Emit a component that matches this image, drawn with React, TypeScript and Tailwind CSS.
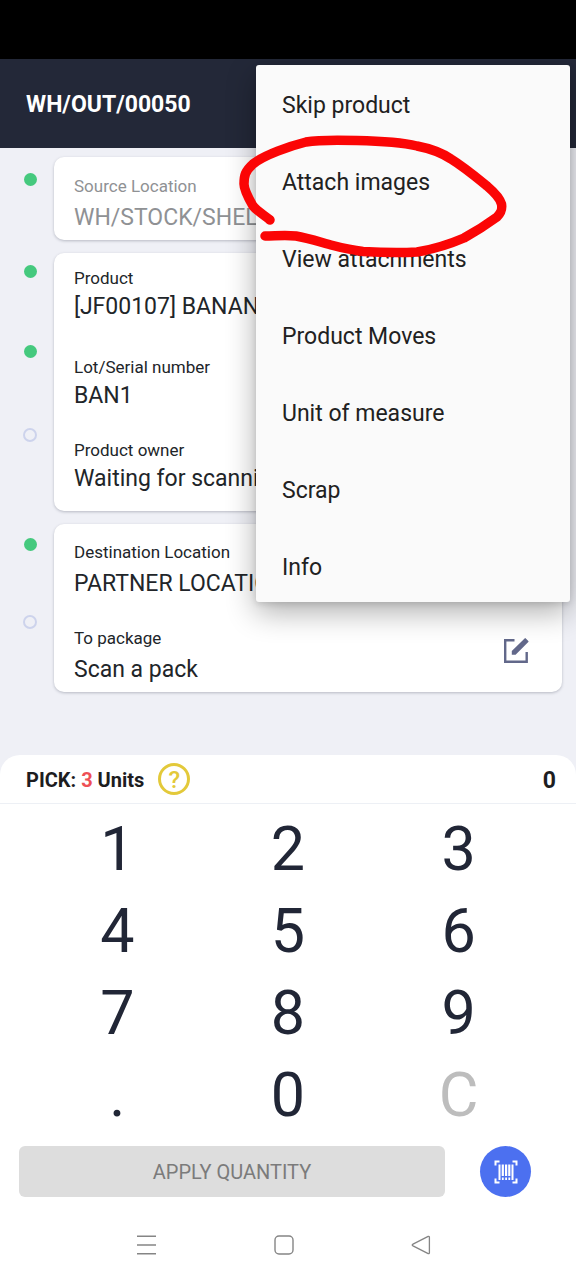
import { clsx } from "clsx";

type Field = {
  label: string;
  value: string;
  className?: string;
};

type Dot = {
  done: boolean;
  className?: string;
};

const MENU_ITEMS = [
  "Skip product",
  "Attach images",
  "View attachments",
  "Product Moves",
  "Unit of measure",
  "Scrap",
  "Info",
];

const KEYS = ["1", "2", "3", "4", "5", "6", "7", "8", "9", ".", "0", "C"];

export default function App() {
  return (
    <div className="relative flex min-h-screen flex-col overflow-hidden bg-[#eff0f6] font-[Roboto,sans-serif] text-[#212529]">
      {/* Status bar */}
      <div className="h-[59px] bg-black" />

      <header className="flex h-[89px] items-center bg-[#232838] px-[26px] pt-1">
        <h1 className="text-[23px] font-bold text-white">WH/OUT/00050</h1>
      </header>

      <main className="flex flex-1 flex-col gap-[13px] pt-[9px] pr-3.5 pb-[63px]">
        <StepCard
          dots={[{ done: true, className: "mt-3.5" }]}
          fields={[{ label: "Source Location", value: "WH/STOCK/SHELF 1" }]}
          className="pt-[19px] pb-2 text-[#8f9194]"
        />
        <StepCard
          dots={[
            { done: true, className: "mt-2.5" },
            { done: true, className: "mt-16" },
            { done: false, className: "mt-[68px]" },
          ]}
          fields={[
            { label: "Product", value: "[JF00107] BANANA" },
            { label: "Lot/Serial number", value: "BAN1", className: "mt-9" },
            { label: "Product owner", value: "Waiting for scanning", className: "mt-[30px]" },
          ]}
          className="pt-[15px] pb-[18px]"
          dense
        />
        <StepCard
          dots={[
            { done: true, className: "mt-3" },
            { done: false, className: "mt-[62px]" },
          ]}
          fields={[
            { label: "Destination Location", value: "PARTNER LOCATION" },
            { label: "To package", value: "Scan a pack", className: "mt-[30px]" },
          ]}
          className="pt-[18px] pb-2"
          editable
        />
      </main>

      {/* Quantity panel */}
      <section className="rounded-t-[20px] bg-white">
        <div className="flex h-[49px] items-center border-b border-[#edf0f5] px-5 pl-[26px]">
          <p className="pt-0.5 text-xl font-bold text-[#1d1d1f]">
            PICK: <span className="text-[#ee4f55]">3</span> Units
          </p>
          <button
            type="button"
            aria-label="Help"
            className="ml-3.5 flex size-8 items-center justify-center rounded-full border-3 border-[#e3c93a] pt-0.5 text-2xl font-medium text-[#e3c93a]"
          >
            ?
          </button>
          <output className="ml-auto pt-1 text-[23px] font-bold text-[#1d1d1f]">0</output>
        </div>

        <div className="grid grid-cols-3 px-8 pt-[3px]">
          {KEYS.map((key) => (
            <button
              key={key}
              type="button"
              className={clsx(
                "h-[82px] pt-0.5 text-[61px] leading-none",
                key === "C" ? "text-[#bdbdbd]" : "text-[#212636]",
              )}
            >
              {key}
            </button>
          ))}
        </div>

        <div className="flex items-center gap-[35px] pt-[11px] pr-[45px] pl-[19px]">
          <button
            type="button"
            disabled
            className="h-[51px] flex-1 rounded-md bg-[#dddddd] text-xl text-[#7b7b7b]"
          >
            APPLY QUANTITY
          </button>
          <button
            type="button"
            aria-label="Scan barcode"
            className="flex size-[51px] items-center justify-center rounded-full bg-[#4c70f0] text-white"
          >
            <BarcodeIcon />
          </button>
        </div>

        <SystemNav />
      </section>

      <div
        role="menu"
        className="absolute top-[65px] right-1.5 flex w-[314px] flex-col gap-1.5 rounded-[3px] bg-[#fafafa] pt-1 shadow-[0_10px_30px_rgba(0,0,0,0.32),0_2px_6px_rgba(0,0,0,0.12)]"
      >
        {MENU_ITEMS.map((item) => (
          <button
            key={item}
            type="button"
            role="menuitem"
            className="h-[71px] px-[26px] pt-[3px] text-left text-[23px] text-[#212121]"
          >
            {item}
          </button>
        ))}
      </div>

      <Marker />
    </div>
  );
}

function StepCard({
  dots,
  fields,
  className,
  dense,
  editable,
}: {
  dots: Dot[];
  fields: Field[];
  className: string;
  dense?: boolean;
  editable?: boolean;
}) {
  return (
    <div className="flex">
      <div className="flex w-[54px] shrink-0 flex-col">
        {dots.map((dot, i) => (
          <div key={i} className={clsx("flex h-4 items-center pl-[23px]", dot.className)}>
            <span
              className={clsx(
                "rounded-full",
                dot.done ? "ml-px size-[13px] bg-[#45c97e]" : "size-3.5 border-2 border-[#cdd3ec]",
              )}
            />
          </div>
        ))}
      </div>
      <div
        className={clsx(
          "relative flex min-w-0 flex-1 flex-col rounded-[10px] bg-white px-5 shadow-[0_1px_3px_rgba(40,45,70,0.28)]",
          className,
        )}
      >
        {fields.map((field) => (
          <div
            key={field.label}
            className={clsx("flex flex-col", dense ? "gap-[5px]" : "gap-2", field.className)}
          >
            <span className="text-[17px] leading-5">{field.label}</span>
            <span className="truncate text-[23px] leading-7">{field.value}</span>
          </div>
        ))}
        {editable && (
          <button
            type="button"
            aria-label="Edit package"
            className="absolute right-8 bottom-7 text-[#62688a]"
          >
            <EditIcon />
          </button>
        )}
      </div>
    </div>
  );
}

function SystemNav() {
  return (
    <nav className="flex h-[83px] items-center justify-between pt-3 pr-[145px] pl-[136px] text-[#858585]">
      <button type="button" aria-label="Recent apps">
        <svg width="21" height="20" viewBox="0 0 21 20" fill="none" stroke="currentColor" strokeWidth="1.6">
          <path d="M1 1.2h19M1 10h19M1 18.8h19" />
        </svg>
      </button>
      <button type="button" aria-label="Home">
        <svg width="20" height="20" viewBox="0 0 20 20" fill="none" stroke="currentColor" strokeWidth="1.4">
          <rect x="1" y="1" width="18" height="18" rx="4" />
        </svg>
      </button>
      <button type="button" aria-label="Back">
        <svg width="20" height="20" viewBox="0 0 20 20" fill="none" stroke="currentColor" strokeWidth="1.3" strokeLinejoin="round">
          <path d="M17.2 1.4 2 9.1q-1.6.9 0 1.8l15.2 7.7q1.2.4 1.2-.9V2.3q0-1.3-1.2-.9z" />
        </svg>
      </button>
    </nav>
  );
}

function EditIcon() {
  return (
    <svg width="28" height="28" viewBox="0 0 28 28" fill="none" stroke="currentColor">
      <path d="M12.5 4.2H3.2v21.500h21.500V16" strokeWidth="2.400" />
      <path
        d="M9.800 18.800v-3.800L22.600 2.400q.6-.6 1.200 0l2.500 2.500q.6.6 0 1.200L13.600 18.800z"
        fill="currentColor"
        stroke="none"
      />
    </svg>
  );
}

function BarcodeIcon() {
  return (
    <svg width="24" height="24" viewBox="0 0 24 24" fill="none" stroke="currentColor">
      <path d="M1.500 5.500v-4h4M18.500 1.500h4v4M22.500 18.500v4h-4M5.500 22.500h-4v-4" strokeWidth="2" />
      <path d="M5.500 4.500v15.500M18.500 4.500v15.500" strokeWidth="2" />
      <path d="M8.800 4.500v11.500M12.100 4.500v11.500M15.300 4.500v11.500" strokeWidth="2.200" />
      <path d="M8.800 17.500v2.500M12.100 17.500v2.500M15.300 17.500v2.500" strokeWidth="1.800" />
    </svg>
  );
}

// Hand-drawn ring around "Attach images"
function Marker() {
  return (
    <svg
      className="pointer-events-none absolute top-[120px] right-14"
      width="290"
      height="150"
      viewBox="230 120 290 150"
      fill="none"
      stroke="#fb0505"
      strokeWidth="9.500"
      strokeLinecap="round"
      strokeLinejoin="round"
    >
      <path d="M270 220C264 215 257 211 253 206C249 199 244 190 244 184C244 176 245 171 253 164C264 155 290 146 306 142C320 139.500 340 140 357 140.500C380 141 400 142 417 146C430 148.500 442 153 451 159C464 167 476 177 487 186C494 192 500 198 501.500 204C502.500 210 501 213 497 217C486 225 475 232 464 238C450 244 435 249 417 252C400 253 380 252.500 363 251.500C352 250 343 248 333 245.500C320 242 308 238 296 236C285 235 275 236 265 236" />
    </svg>
  );
}
